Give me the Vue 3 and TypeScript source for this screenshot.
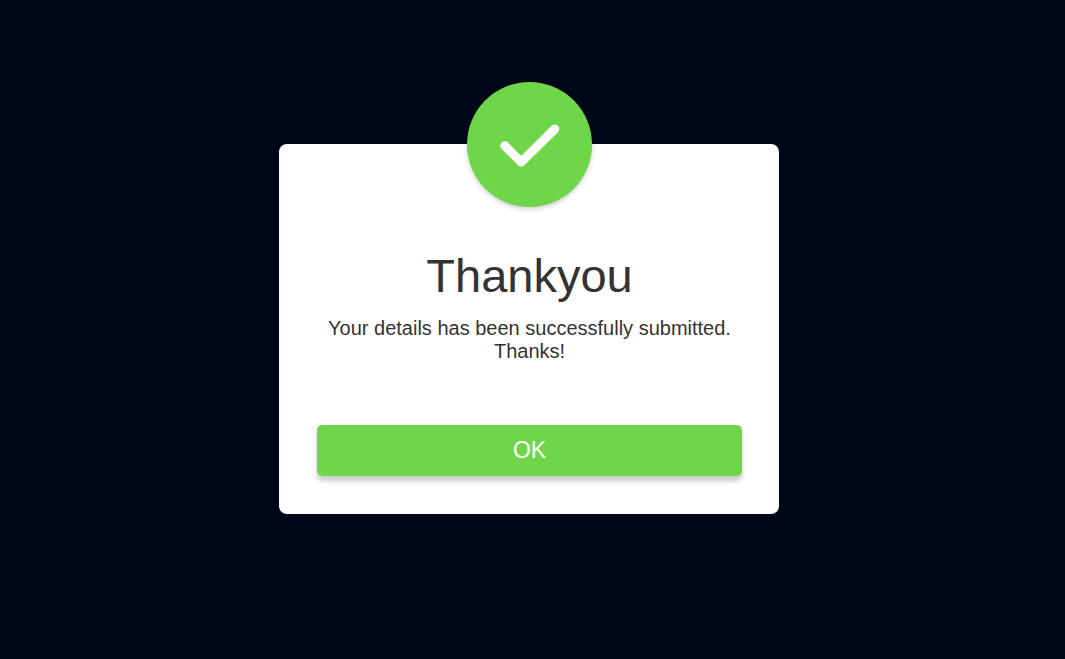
<script setup lang="ts">
import { ref } from 'vue'

const open = ref(true)
const title = 'Thankyou'
const message = 'Your details has been successfully submitted. Thanks!'
</script>

<template>
  <main class="page">
    <section v-if="open" class="popup" role="dialog" aria-labelledby="popup-title">
      <div class="badge">
        <svg class="tick" viewBox="0 0 60 44" aria-hidden="true">
          <path d="M4.7 22.7 L21.2 39.1 L54.8 6" />
        </svg>
      </div>
      <h2 id="popup-title" class="title">{{ title }}</h2>
      <p class="message">{{ message }}</p>
      <button type="button" class="ok" @click="open = false">OK</button>
    </section>
  </main>
</template>

<style>
body {
  margin: 0;
  background: #000718;
}
</style>

<style scoped>
.page {
  min-height: 100vh;
  box-sizing: border-box;
  padding: 0 23px 1px 16px;
  display: flex;
  align-items: center;
  justify-content: center;
  font-family: "Liberation Sans", Arial, sans-serif;
  color: #333;
}
.popup {
  box-sizing: border-box;
  width: 100%;
  max-width: 500px;
  padding: 0 37px 38px 38px;
  display: flex;
  flex-direction: column;
  align-items: center;
  text-align: center;
  background: #fff;
  border-radius: 8px;
}
.badge {
  width: 125px;
  height: 125px;
  margin-top: -62px;
  display: flex;
  align-items: center;
  justify-content: center;
  border-radius: 50%;
  background: #6fd649;
  box-shadow: 0 2px 5px rgba(0, 0, 0, 0.2);
}
.tick {
  width: 60px;
  height: 44px;
  fill: none;
  stroke: #fff;
  stroke-width: 9;
  stroke-linecap: round;
  stroke-linejoin: round;
}
.title {
  margin: 41px 0 13px;
  font-size: 47px;
  line-height: 56px;
  font-weight: 500;
}
.message {
  margin: 0;
  font-size: 20px;
  line-height: 23px;
}
.ok {
  width: 100%;
  height: 51px;
  margin-top: 62px;
  padding: 0;
  border: 0;
  border-radius: 5px;
  background: #6fd649;
  color: #fff;
  font-family: inherit;
  font-size: 23px;
  cursor: pointer;
  box-shadow: 0 5px 5px rgba(0, 0, 0, 0.2);
}
</style>
